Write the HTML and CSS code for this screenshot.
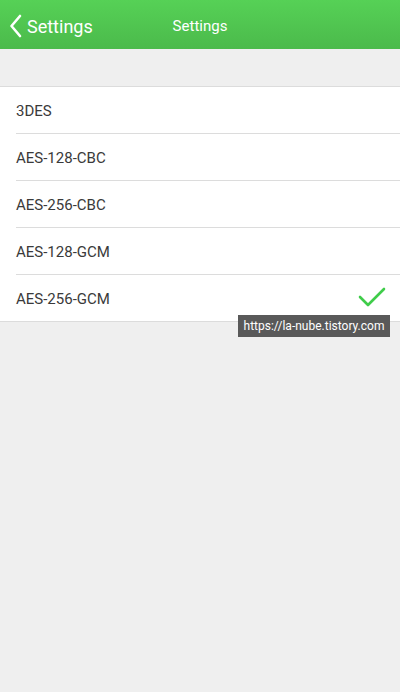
FILE: index.html
```html
<!DOCTYPE html>
<html lang="en">
<head>
    <meta charset="UTF-8">
    <meta name="viewport" content="width=device-width, initial-scale=1.0">
    <title>Settings</title>
    <link rel="stylesheet" href="styles.css">
</head>
<body>
    <!-- Navigation bar -->
    <header class="nav-bar">
        <a class="back-link" href="#">
            <svg class="back-icon" width="14" height="24" viewBox="0 0 14 24">
                <path d="M11 2 L2.5 12 L11 22" fill="none" stroke="#fff" stroke-width="2.6" stroke-linecap="round" stroke-linejoin="round"/>
            </svg>
            <span>Settings</span>
        </a>
        <h1 class="nav-title">Settings</h1>
    </header>

    <div class="spacer"></div>

    <!-- Cipher list -->
    <ul class="option-list">
        <li class="option-item">3DES</li>
        <li class="option-item">AES-128-CBC</li>
        <li class="option-item">AES-256-CBC</li>
        <li class="option-item">AES-128-GCM</li>
        <li class="option-item selected">
            AES-256-GCM
            <svg class="check-icon" width="28" height="22" viewBox="0 0 28 22">
                <path d="M2 11 L10 19 L26 3" fill="none" stroke="#3fcc4a" stroke-width="2.6" stroke-linecap="round" stroke-linejoin="round"/>
            </svg>
        </li>
    </ul>

    <div class="watermark">https://la-nube.tistory.com</div>
</body>
</html>
```

FILE: styles.css
```css
/* Global Styles */
body {
    margin: 0;
    background-color: #efefef;
    font-family: Roboto, 'Noto Sans', sans-serif;
    color: #333;
    min-height: 100vh;
    position: relative;
}

/* Navigation Bar */
.nav-bar {
    height: 49px;
    display: flex;
    align-items: center;
    position: relative;
    background: linear-gradient(#56d156, #4bba4b);
}

.back-link {
    display: flex;
    align-items: center;
    gap: 4px;
    padding-left: 9px;
    padding-top: 3px;
    color: #fff;
    text-decoration: none;
    font-size: 18px;
}

.nav-title {
    position: absolute;
    left: 0;
    right: 0;
    top: 17px;
    margin: 0;
    text-align: center;
    font-size: 15px;
    font-weight: normal;
    color: #fff;
    pointer-events: none;
}

.spacer {
    height: 37px;
}

/* Option List */
.option-list {
    list-style: none;
    margin: 0;
    padding: 0 0 0 16px;
    background-color: #fff;
    border-top: 1px solid #dcdcdc;
    border-bottom: 1px solid #dcdcdc;
}

.option-item {
    height: 44px;
    padding-top: 2px;
    display: flex;
    align-items: center;
    justify-content: space-between;
    padding-right: 14px;
    font-size: 15px;
    color: #3a3a3a;
    border-bottom: 1px solid #dcdcdc;
}

.option-item:last-child {
    border-bottom: none;
}

.check-icon {
    margin-top: -4px;
}

/* Watermark */
.watermark {
    position: absolute;
    left: 238px;
    top: 315px;
    width: 152px;
    height: 22px;
    line-height: 22px;
    background-color: #595959;
    color: #fff;
    font-size: 12px;
    text-align: center;
}
```
